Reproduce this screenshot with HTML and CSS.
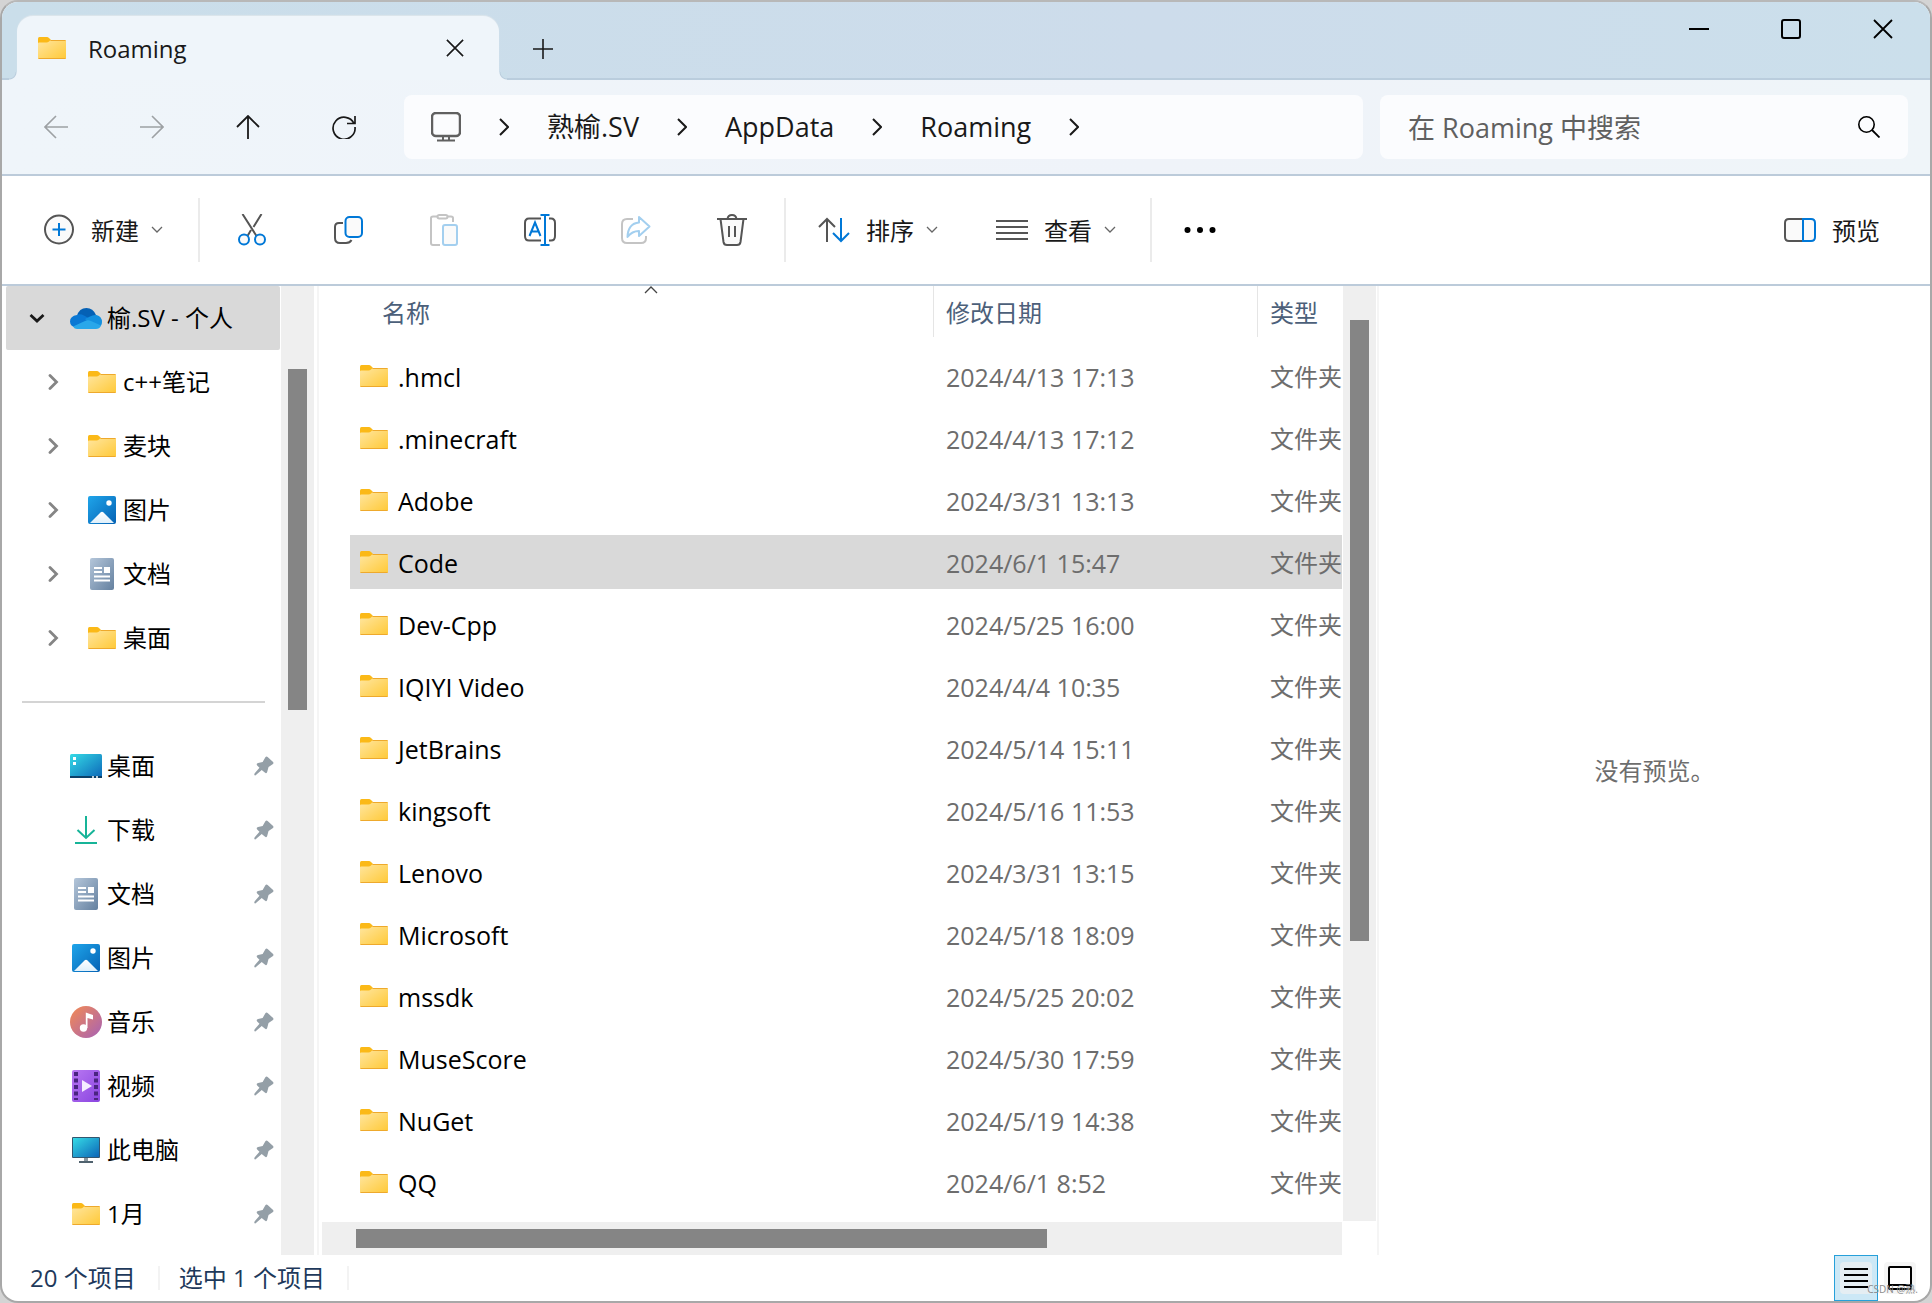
FILE: index.html
```html
<!DOCTYPE html>
<html lang="zh-CN">
<head>
<meta charset="utf-8">
<title>Roaming</title>
<link rel="stylesheet" href="styles.css">
</head>
<body>
<svg class="sprite" aria-hidden="true">
  <defs>
    <linearGradient id="g-folder" x1="0" y1="0" x2="1" y2="1"><stop offset="0" stop-color="#ffe6a0"/><stop offset="1" stop-color="#ffc937"/></linearGradient>
    <linearGradient id="g-blue" x1="0" y1="0" x2="1" y2="1"><stop offset="0" stop-color="#1fa5ea"/><stop offset="1" stop-color="#0562b4"/></linearGradient>
    <linearGradient id="g-doc" x1="0" y1="0" x2="1" y2="1"><stop offset="0" stop-color="#b4c6da"/><stop offset="1" stop-color="#64809f"/></linearGradient>
    <linearGradient id="g-desk" x1="0" y1="0" x2="1" y2="1"><stop offset="0" stop-color="#35dbe6"/><stop offset="1" stop-color="#0c66b8"/></linearGradient>
    <linearGradient id="g-music" x1="0" y1="0" x2="1" y2="1"><stop offset="0" stop-color="#f48b52"/><stop offset="1" stop-color="#a661b6"/></linearGradient>
    <linearGradient id="g-video" x1="0" y1="0" x2="1" y2="1"><stop offset="0" stop-color="#b877f2"/><stop offset="1" stop-color="#8a45e0"/></linearGradient>
    <linearGradient id="g-hill" x1="0" y1="0" x2="0" y2="1"><stop offset="0" stop-color="#fff"/><stop offset="1" stop-color="#dff0fb"/></linearGradient>
  </defs>
  <symbol id="folder" viewBox="0 0 28 22"><path d="M0 1.500Q0 0 1.500 0H9Q10 0 11 1L13 3V8H0Z" fill="#fbb917"/><path d="M0 6.500Q0 5.500 1 5.500H8.500Q10 5.500 11 4.500L12 3.600Q12.600 3 13.500 3H27Q28 3 28 4V21Q28 22 27 22H1Q0 22 0 21Z" fill="url(#g-folder)"/><path d="M12.500 3.500H27.500M.5 21.500H27.500" stroke="#eea92c"/></symbol>
  <symbol id="cloud" viewBox="0 0 32 21"><path d="M7 8Q9 0 16.500 0Q23 0 26 7L17 14Z" fill="#0561b5"/><path d="M7 7Q10 5.500 14 7.500L24 13L6 20Q0 18 0 13.500Q0 8 7 7Z" fill="#0a78d4"/><path d="M15 11L20 8.500Q23 6.500 26.500 7Q32 8.500 32 14Q32 18 28 20L20 16Z" fill="#1490df"/><path d="M3 18.500L15 13Q18 11.500 21 13L31 17.500Q29.500 21 26 21H7Q4.500 21 3 18.500Z" fill="#29a7ea"/></symbol>
  <symbol id="picture" viewBox="0 0 28 28"><rect width="28" height="28" rx="2" fill="url(#g-blue)"/><circle cx="21" cy="7" r="2.700" fill="#fff"/><path d="M2 27L12.500 16.500Q14 15 15.500 16.500L26 27Z" fill="url(#g-hill)"/></symbol>
  <symbol id="document" viewBox="0 0 28 32"><rect x="2" width="24" height="32" rx="2" fill="url(#g-doc)"/><path d="M6 10H14M6 14H14M6 18.500H22M6 22.500H22" stroke="#fff" stroke-width="2"/><rect x="16" y="9" width="6" height="6" fill="#fff"/></symbol>
  <symbol id="desktop" viewBox="0 0 32 24"><rect width="32" height="24" rx="1.500" fill="url(#g-desk)"/><path d="M0 23H32" stroke="#0b4068" stroke-width="2"/><path d="M3 4.500H6M3 9.500H6" stroke="#fff" stroke-width="3"/><path d="M22 23H24M26 23H28" stroke="#fff" stroke-width="1.500"/></symbol>
  <symbol id="download" viewBox="0 0 22 28"><path d="M11 0V22M2.500 14L11 22L19.500 14M0 27H22" fill="none" stroke="#16b498" stroke-width="2"/></symbol>
  <symbol id="music" viewBox="0 0 32 32"><circle cx="16" cy="16" r="16" fill="url(#g-music)"/><circle cx="13.500" cy="22" r="3.700" fill="#fff"/><path d="M15.800 22V6.500Q19 7.500 23 9V13.500L17.500 12V22Z" fill="#fff"/></symbol>
  <symbol id="video" viewBox="0 0 28 32"><rect width="28" height="32" rx="2" fill="url(#g-video)"/><path d="M4 2V30M24 2V30" stroke="#4a2480" stroke-width="4" stroke-dasharray="4 2.500"/><path d="M10 10L20 16L10 22Z" fill="#f4ecff"/></symbol>
  <symbol id="computer" viewBox="0 0 28 26"><rect width="28" height="21" rx="1" fill="#33566f"/><rect x="1" y="1" width="26" height="19" fill="url(#g-desk)"/><path d="M12 21H16V24H12Z" fill="#8a979f"/><path d="M7 25H21" stroke="#50626e" stroke-width="2"/></symbol>
  <symbol id="pin" viewBox="0 0 22 22"><path d="M12.500 1.500Q13.500 0 15 1L21 6.500Q22 8 20.500 9L16 12L14.500 17.500Q13.500 20 11.500 18L8.500 15.500L1.500 21.500Q-.5 21 .8 19L6 13L3.500 10.500Q2 8.500 4.500 7.800L9.500 6.500Z" fill="#949fa7"/></symbol>
  <symbol id="right" viewBox="0 0 16 16"><path d="M4 1.500L10.500 8L4 14.500" fill="none" stroke="currentColor" stroke-width="2.800" stroke-linecap="round"/></symbol>
  <symbol id="crumb" viewBox="0 0 10 18"><path d="M1 1L9 9L1 17" fill="none" stroke="currentColor" stroke-width="2"/></symbol>
  <symbol id="drop" viewBox="0 0 12 8"><path d="M1 1L6 6L11 1" fill="none" stroke="currentColor" stroke-width="1.300"/></symbol>
  <symbol id="cross" viewBox="0 0 20 20"><path d="M1 1L19 19M19 1L1 19" fill="none" stroke="currentColor" stroke-width="1.800"/></symbol>
</svg>

<div class="window">
  <header class="titlebar">
    <div class="tab">
      <svg class="i-folder"><use href="#folder"/></svg>
      <span class="tab-title">Roaming</span>
      <button class="tab-close" aria-label="关闭标签页"><svg width="18" height="18"><use href="#cross"/></svg></button>
    </div>
    <button class="tab-new" aria-label="新建标签页"><svg width="20" height="20" viewBox="0 0 20 20"><path d="M10 0V20M0 10H20" stroke="currentColor" stroke-width="1.600"/></svg></button>
    <div class="controls">
      <button aria-label="最小化"><svg width="20" height="20" viewBox="0 0 20 20"><path d="M0 10H20" stroke="currentColor" stroke-width="2"/></svg></button>
      <button aria-label="最大化"><svg width="20" height="20" viewBox="0 0 20 20"><rect x="1" y="1" width="18" height="18" rx="2" fill="none" stroke="currentColor" stroke-width="2"/></svg></button>
      <button aria-label="关闭"><svg width="20" height="20"><use href="#cross"/></svg></button>
    </div>
  </header>

  <nav class="navbar" aria-label="导航">
    <div class="nav-buttons">
      <button aria-label="后退" disabled><svg width="24" height="24" viewBox="0 0 24 24"><path d="M24 12H1M12 1L1 12L12 23" fill="none" stroke="currentColor" stroke-width="1.600"/></svg></button>
      <button aria-label="前进" disabled><svg width="24" height="24" viewBox="0 0 24 24"><path d="M0 12H23M12 1L23 12L12 23" fill="none" stroke="currentColor" stroke-width="1.600"/></svg></button>
      <button aria-label="向上"><svg width="24" height="24" viewBox="0 0 24 24"><path d="M12 24V1M1 12L12 1L23 12" fill="none" stroke="currentColor" stroke-width="1.800"/></svg></button>
      <button aria-label="刷新"><svg width="24" height="24" viewBox="0 0 24 24"><path d="M22 8.500A11 11 0 1 0 23 12M23 1V8.500H15" fill="none" stroke="currentColor" stroke-width="1.700"/></svg></button>
    </div>
    <div class="address">
      <svg class="pc" viewBox="0 0 30 30"><rect x="1" y="1" width="28" height="23" rx="4" fill="none" stroke="currentColor" stroke-width="2.500"/><path d="M12 24V28M18 24V28M6 28.500H24" stroke="currentColor" stroke-width="2"/></svg>
      <svg class="crumb"><use href="#crumb"/></svg>
      <a href="#">熟榆.SV</a>
      <svg class="crumb"><use href="#crumb"/></svg>
      <a href="#">AppData</a>
      <svg class="crumb"><use href="#crumb"/></svg>
      <a href="#">Roaming</a>
      <svg class="crumb"><use href="#crumb"/></svg>
    </div>
    <label class="search">
      <input type="text" placeholder="在 Roaming 中搜索" aria-label="搜索">
      <svg width="22" height="22" viewBox="0 0 22 22"><circle cx="8.500" cy="8.500" r="7.700" fill="none" stroke="currentColor" stroke-width="1.600"/><path d="M14 14L21.500 21.500" stroke="currentColor" stroke-width="1.800"/></svg>
    </label>
  </nav>

  <div class="toolbar" role="toolbar">
    <button class="menu"><svg width="32" height="32" viewBox="0 0 32 32"><circle cx="16" cy="15.500" r="14" fill="#fafafa" stroke="#555" stroke-width="2"/><path d="M16 9V22M9.500 15.500H22.500" stroke="#0078d7" stroke-width="2"/></svg><span>新建</span><svg class="drop"><use href="#drop"/></svg></button>
    <span class="sep sep-new"></span>
    <button class="tool" aria-label="剪切"><svg width="28" height="32" viewBox="0 0 28 32"><path d="M4.500 0L18.500 22M23.500 0L15.500 13M13 16L9.500 22" fill="none" stroke="#555" stroke-width="2"/><circle cx="6" cy="25.500" r="5" fill="#fafafa" stroke="#0078d7" stroke-width="2"/><circle cx="22" cy="25.500" r="5" fill="#fafafa" stroke="#0078d7" stroke-width="2"/></svg></button>
    <button class="tool" aria-label="复制"><svg width="30" height="30" viewBox="0 0 30 30"><path d="M10 8H6Q2 8 2 12V23Q2 28 7 28H13Q17 28 18.500 25" fill="none" stroke="#555" stroke-width="2"/><rect x="12.500" y="2" width="16.500" height="20" rx="4" fill="#fafafa" stroke="#0078d7" stroke-width="2"/></svg></button>
    <button class="tool" aria-label="粘贴" disabled><svg width="30" height="32" viewBox="0 0 30 32"><path d="M11 31H4Q2 31 2 29V4Q2 2.500 4 2.500H8M19 2.500H22Q24 2.500 24 4V8" fill="none" stroke="#c4c4c4" stroke-width="2"/><rect x="8.500" y="1" width="10" height="3.500" rx="1.700" fill="#fff" stroke="#c4c4c4" stroke-width="2"/><rect x="14" y="11" width="14" height="20" rx="2" fill="#fafafa" stroke="#a3cfef" stroke-width="2"/></svg></button>
    <button class="tool" aria-label="重命名"><svg width="32" height="32" viewBox="0 0 32 32"><path d="M17 4.500H5Q1 4.500 1 9V22Q1 26.500 5 26.500H17M25 4.500H27Q31 4.500 31 9V22Q31 26.500 27 26.500H25" fill="none" stroke="#555" stroke-width="2"/><path d="M21 1V31M16.500 1H25.500M16.500 31H25.500M5.500 22L11 8.500L16.500 22M7.500 17.500H14.500" fill="none" stroke="#0078d7" stroke-width="2"/></svg></button>
    <button class="tool" aria-label="共享" disabled><svg width="30" height="30" viewBox="0 0 30 30"><path d="M12 4H6Q1 4 1 9V23Q1 28 6 28H20Q25 28 25 23V21" fill="none" stroke="#c4c4c4" stroke-width="2"/><path d="M18 2L28.500 11.500L18 21V16Q11 16 6.500 22Q7 8.500 18 7.500Z" fill="none" stroke="#a3cfef" stroke-width="2" stroke-linejoin="round"/></svg></button>
    <button class="tool" aria-label="删除"><svg width="30" height="32" viewBox="0 0 30 32"><path d="M3.500 5L6.500 28Q7 31 10 31H20Q23 31 23.500 28L26.500 5" fill="#fafafa" stroke="#555" stroke-width="2"/><path d="M0 5H30M10.500 5Q11 1 15 1Q19 1 19.500 5M12 12V23M18 12V23" fill="none" stroke="#555" stroke-width="2"/></svg></button>
    <span class="sep sep-tools"></span>
    <button class="menu"><svg width="32" height="26" viewBox="0 0 32 26"><path d="M9 25V2M1 10L9 2L17 10" fill="none" stroke="#555" stroke-width="2"/><path d="M23 1V24M15 16L23 24L31 16" fill="none" stroke="#0078d7" stroke-width="2"/></svg><span>排序</span><svg class="drop"><use href="#drop"/></svg></button>
    <button class="menu menu-view"><svg width="32" height="20" viewBox="0 0 32 20"><path d="M0 1H32M0 7H32M0 13H32M0 19H32" stroke="#555" stroke-width="2"/></svg><span>查看</span><svg class="drop"><use href="#drop"/></svg></button>
    <span class="sep sep-view"></span>
    <button class="more" aria-label="更多"><svg width="32" height="8" viewBox="0 0 32 8"><circle cx="3.500" cy="4" r="3"/><circle cx="16" cy="4" r="3"/><circle cx="28.500" cy="4" r="3"/></svg></button>
    <button class="menu menu-preview"><svg width="32" height="24" viewBox="0 0 32 24"><path d="M19 1H5Q1 1 1 5V19Q1 23 5 23H19" fill="#fafafa" stroke="#555" stroke-width="2"/><path d="M19 1H27Q31 1 31 5V19Q31 23 27 23H19Z" fill="#fafafa" stroke="#0078d7" stroke-width="2"/></svg><span>预览</span></button>
  </div>

  <main class="content">
    <aside class="sidebar">
      <div class="tree">
        <a class="item root" href="#"><svg class="chev" viewBox="0 0 16 16"><path d="M1.500 5L8 11L14.500 5" fill="none" stroke="currentColor" stroke-width="2.800"/></svg><span class="icon"><svg width="32" height="21"><use href="#cloud"/></svg></span>榆.SV - 个人</a>
        <a class="item child" href="#"><svg class="chev"><use href="#right"/></svg><span class="icon"><svg class="i-folder"><use href="#folder"/></svg></span>c++笔记</a>
        <a class="item child" href="#"><svg class="chev"><use href="#right"/></svg><span class="icon"><svg class="i-folder"><use href="#folder"/></svg></span>麦块</a>
        <a class="item child" href="#"><svg class="chev"><use href="#right"/></svg><span class="icon"><svg width="28" height="28"><use href="#picture"/></svg></span>图片</a>
        <a class="item child" href="#"><svg class="chev"><use href="#right"/></svg><span class="icon"><svg width="28" height="32"><use href="#document"/></svg></span>文档</a>
        <a class="item child" href="#"><svg class="chev"><use href="#right"/></svg><span class="icon"><svg class="i-folder"><use href="#folder"/></svg></span>桌面</a>
        <hr>
        <a class="item quick" href="#"><span class="icon"><svg width="32" height="24"><use href="#desktop"/></svg></span>桌面<svg class="pin"><use href="#pin"/></svg></a>
        <a class="item quick" href="#"><span class="icon"><svg width="22" height="28"><use href="#download"/></svg></span>下载<svg class="pin"><use href="#pin"/></svg></a>
        <a class="item quick" href="#"><span class="icon"><svg width="28" height="32"><use href="#document"/></svg></span>文档<svg class="pin"><use href="#pin"/></svg></a>
        <a class="item quick" href="#"><span class="icon"><svg width="28" height="28"><use href="#picture"/></svg></span>图片<svg class="pin"><use href="#pin"/></svg></a>
        <a class="item quick" href="#"><span class="icon"><svg width="32" height="32"><use href="#music"/></svg></span>音乐<svg class="pin"><use href="#pin"/></svg></a>
        <a class="item quick" href="#"><span class="icon"><svg width="28" height="32"><use href="#video"/></svg></span>视频<svg class="pin"><use href="#pin"/></svg></a>
        <a class="item quick" href="#"><span class="icon"><svg width="28" height="26"><use href="#computer"/></svg></span>此电脑<svg class="pin"><use href="#pin"/></svg></a>
        <a class="item quick" href="#"><span class="icon"><svg class="i-folder"><use href="#folder"/></svg></span>1月<svg class="pin"><use href="#pin"/></svg></a>
      </div>
      <div class="track track-side"><div class="thumb"></div></div>
    </aside>

    <section class="files">
      <div class="list">
        <table>
          <colgroup><col><col class="col-date"><col class="col-type"></colgroup>
          <thead>
            <tr>
              <th class="sorted"><button>名称</button><svg class="sort" viewBox="0 0 14 8"><path d="M1 7L7 1L13 7" fill="none" stroke="#444" stroke-width="1.300"/></svg></th>
              <th><button>修改日期</button></th>
              <th><button>类型</button></th>
            </tr>
          </thead>
          <tbody>
            <tr><td><svg class="i-folder"><use href="#folder"/></svg>.hmcl</td><td>2024/4/13 17:13</td><td>文件夹</td></tr>
            <tr><td><svg class="i-folder"><use href="#folder"/></svg>.minecraft</td><td>2024/4/13 17:12</td><td>文件夹</td></tr>
            <tr><td><svg class="i-folder"><use href="#folder"/></svg>Adobe</td><td>2024/3/31 13:13</td><td>文件夹</td></tr>
            <tr class="selected"><td><svg class="i-folder"><use href="#folder"/></svg>Code</td><td>2024/6/1 15:47</td><td>文件夹</td></tr>
            <tr><td><svg class="i-folder"><use href="#folder"/></svg>Dev-Cpp</td><td>2024/5/25 16:00</td><td>文件夹</td></tr>
            <tr><td><svg class="i-folder"><use href="#folder"/></svg>IQIYI Video</td><td>2024/4/4 10:35</td><td>文件夹</td></tr>
            <tr><td><svg class="i-folder"><use href="#folder"/></svg>JetBrains</td><td>2024/5/14 15:11</td><td>文件夹</td></tr>
            <tr><td><svg class="i-folder"><use href="#folder"/></svg>kingsoft</td><td>2024/5/16 11:53</td><td>文件夹</td></tr>
            <tr><td><svg class="i-folder"><use href="#folder"/></svg>Lenovo</td><td>2024/3/31 13:15</td><td>文件夹</td></tr>
            <tr><td><svg class="i-folder"><use href="#folder"/></svg>Microsoft</td><td>2024/5/18 18:09</td><td>文件夹</td></tr>
            <tr><td><svg class="i-folder"><use href="#folder"/></svg>mssdk</td><td>2024/5/25 20:02</td><td>文件夹</td></tr>
            <tr><td><svg class="i-folder"><use href="#folder"/></svg>MuseScore</td><td>2024/5/30 17:59</td><td>文件夹</td></tr>
            <tr><td><svg class="i-folder"><use href="#folder"/></svg>NuGet</td><td>2024/5/19 14:38</td><td>文件夹</td></tr>
            <tr><td><svg class="i-folder"><use href="#folder"/></svg>QQ</td><td>2024/6/1 8:52</td><td>文件夹</td></tr>
          </tbody>
        </table>
      </div>
      <div class="track track-list"><div class="thumb"></div></div>
      <div class="track track-bottom"><div class="thumb"></div></div>
    </section>

    <section class="preview">没有预览。</section>
  </main>

  <footer class="statusbar">
    <span class="status">20 个项目</span>
    <span class="status">选中 1 个项目</span>
    <div class="views">
      <button class="active" aria-label="详细信息"><svg width="32" height="32" viewBox="0 0 32 32"><rect width="32" height="32" rx="4" fill="#e5eef3"/><path d="M4 7H28M4 13H28M4 19H28M4 25H28" stroke="#000" stroke-width="2"/></svg></button>
      <button aria-label="大图标"><svg width="32" height="32" viewBox="0 0 32 32"><rect width="32" height="32" rx="4" fill="#f5f5f5"/><rect x="5" y="5" width="22" height="22" rx="1" fill="#fff" stroke="#000" stroke-width="2"/><path d="M5 23H27" stroke="#000" stroke-width="2"/></svg></button>
    </div>
    <span class="watermark">CSDN @熟.</span>
  </footer>
</div>
</body>
</html>
```
FILE: styles.css
```css
* { box-sizing: border-box; }

body {
  margin: 0;
  background: #d4d4d4;
  color: #000;
  font: 24px/32px "Open Sans", "Noto Sans CJK SC", sans-serif;
}

button {
  display: flex;
  align-items: center;
  justify-content: center;
  padding: 0;
  border: 0;
  background: none;
  color: #191919;
  font: inherit;
}

a { color: inherit; text-decoration: none; }
svg { display: block; flex: none; }
.sprite { position: absolute; width: 0; height: 0; }
.i-folder { width: 28px; height: 22px; }

.window {
  display: flex;
  flex-direction: column;
  min-height: 100vh;
  overflow: hidden;
  border: 2px solid #a8a8a8;
  border-top-color: #b8b8b8;
  border-radius: 18px;
  background: #fff;
}

/* Title bar */
.titlebar {
  display: flex;
  height: 78px;
  padding-left: 15px;
  border-bottom: 2px solid #bacddd;
  background: linear-gradient(90deg, #cadeea, #cddceb 60%, #cbdfeb);
}
.tab {
  position: relative;
  display: flex;
  align-items: center;
  width: 482px;
  margin: 14px 0 -2px;
  padding: 0 35px 0 21px;
  border-radius: 16px 16px 0 0;
  background: #eff5fa;
  box-shadow: 0 -1px 1px #dde6ec;
}
.tab::before,
.tab::after {
  content: "";
  position: absolute;
  bottom: 0;
  width: 8px;
  height: 8px;
}
.tab::before {
  right: 100%;
  background: radial-gradient(circle at 0 0, #cadeea 6px, #bacddd 7px, #eff5fa 8px);
}
.tab::after {
  left: 100%;
  background: radial-gradient(circle at 100% 0, #cadeea 6px, #bacddd 7px, #eff5fa 8px);
}
.tab-title { margin-left: 22px; padding-top: 2px; color: #191919; }
.tab-close { margin-left: auto; }
.tab-new { width: 88px; padding-top: 18px; }
.controls { display: flex; margin: 0 1px 0 auto; }
.controls button { width: 92px; height: 54px; color: #000; }

/* Navigation */
.navbar {
  display: flex;
  padding: 15px 22px 15px 6px;
  border-bottom: 2px solid #bccbda;
  background: linear-gradient(90deg, #eff5fa, #eff3f9 60%, #eff5f9);
}
.nav-buttons { display: flex; width: 396px; }
.nav-buttons button { width: 96px; }
.nav-buttons button:disabled { color: #9da1a4; }
.address,
.search {
  height: 64px;
  border-radius: 8px;
  background: #fbfcfe;
  font-size: 27px;
}
.address {
  display: flex;
  flex: 932 1 0;
  align-items: center;
  gap: 38px;
  padding-left: 27px;
  color: #191919;
}
.pc { width: 30px; height: 30px; color: #606060; }
.crumb { width: 10px; height: 18px; }
.search {
  display: flex;
  flex: 472 1 0;
  align-items: center;
  margin-left: 17px;
  padding: 0 28px;
}
.search input {
  flex: 1;
  min-width: 0;
  padding: 2px 0 0;
  border: 0;
  outline: 0;
  background: none;
  color: #191919;
  font: inherit;
  line-height: 40px;
}
.search input::placeholder { color: #606060; opacity: 1; }

/* Command bar */
.toolbar {
  display: flex;
  align-items: center;
  height: 110px;
  padding: 0 50px 0 41px;
  border-bottom: 2px solid #bccbda;
}
.menu { gap: 16px; }
.menu span { padding-top: 2px; }
.drop { width: 12px; height: 8px; margin-left: -4px; color: #666; }
.menu-view { margin-left: 58px; }
.menu-preview { margin-left: auto; }
.tool { width: 96px; height: 64px; }
.sep { width: 2px; height: 64px; background: #ebebeb; }
.sep-new { margin: 0 4px 0 35px; }
.sep-tools { margin: 0 32px 0 4px; }
.sep-view { margin: 0 32px 0 34px; }

/* Panes */
.content {
  display: grid;
  flex: 1;
  grid-template-columns: 317px minmax(0, 1058fr) minmax(0, 553fr);
}
.track { background: #efefef; }
.thumb { background: #858585; }

.sidebar {
  display: grid;
  grid-template-columns: 274px 33px;
  column-gap: 1px;
  padding-left: 4px;
  border-right: 2px solid #f5f5f5;
}
.tree { padding-bottom: 8px; }
.item { display: flex; align-items: center; height: 64px; white-space: nowrap; }
.root { padding-left: 23px; border-radius: 2px; background: #d9d9d9; }
.child { padding-left: 40px; }
.quick { padding: 0 5px 0 64px; }
.chev { width: 16px; height: 16px; margin-right: 25px; color: #191919; }
.child .chev { margin-right: 24px; color: #858585; }
.icon { display: flex; justify-content: center; width: 32px; margin-right: 5px; }
.pin { width: 22px; height: 20px; margin-left: auto; }
.tree hr { height: 2px; margin: 31px 15px 31px 16px; border: 0; background: #d4d4d4; }
.track-side { display: grid; grid-template-rows: 83px 341fr 545fr; padding: 0 7px; }
.track-side .thumb { grid-row: 2; }

.files {
  display: grid;
  grid-template-columns: minmax(0, 1fr) 33px;
  grid-template-rows: 1fr 33px;
  gap: 1px;
  padding: 0 1px 0 3px;
}
.list { overflow: hidden; padding-left: 28px; }
table {
  width: 100%;
  margin-top: -8px;
  border-spacing: 0 8px;
  table-layout: fixed;
}
.col-date { width: 324px; }
.col-type { width: 85px; }
th, td { padding: 0 0 0 13px; text-align: left; white-space: nowrap; }
th {
  position: relative;
  height: 55px;
  padding-top: 11px;
  background: linear-gradient(#e5e5e5, #e5e5e5) 0 0 / 1px 51px no-repeat;
  font-weight: 400;
  vertical-align: top;
}
th button { color: #4c607a; }
.sorted { padding-left: 32px; background: none; }
.sort { position: absolute; top: 0; left: 294px; width: 14px; height: 8px; }
td { height: 54px; padding-top: 1px; color: #6d6d6d; }
td:nth-child(2) { font-size: 25px; }
td:first-child { padding-left: 10px; color: #000; font-size: 25px; }
td .i-folder { display: inline-block; margin-right: 10px; vertical-align: 0; }
.selected td { background: #d9d9d9; }
.track-list { display: grid; grid-template-rows: 34px 621fr 280fr; padding: 0 7px; }
.track-list .thumb { grid-row: 2; }
.track-bottom { display: grid; grid-template-columns: 34px 691fr 295fr; padding: 7px 0; }
.track-bottom .thumb { grid-column: 2; }

.preview {
  display: flex;
  align-items: center;
  justify-content: center;
  border-left: 2px solid #f5f5f5;
  color: #6d6d6d;
}

/* Status bar */
.statusbar {
  position: relative;
  display: flex;
  align-items: center;
  height: 46px;
  padding: 0 8px 0 28px;
  color: #1e395b;
}
.status { height: 24px; margin-right: 19px; padding-right: 22px; border-right: 2px solid #f3f3f3; line-height: 24px; }
.views { display: flex; height: 46px; margin-left: auto; }
.views button { width: 44px; }
.views .active { border: 1px solid #26a0da; background: #cce8f6; }
.watermark {
  position: absolute;
  right: 12px;
  bottom: 4px;
  color: #8c8c8c;
  font-size: 10px;
  line-height: 16px;
}
```
